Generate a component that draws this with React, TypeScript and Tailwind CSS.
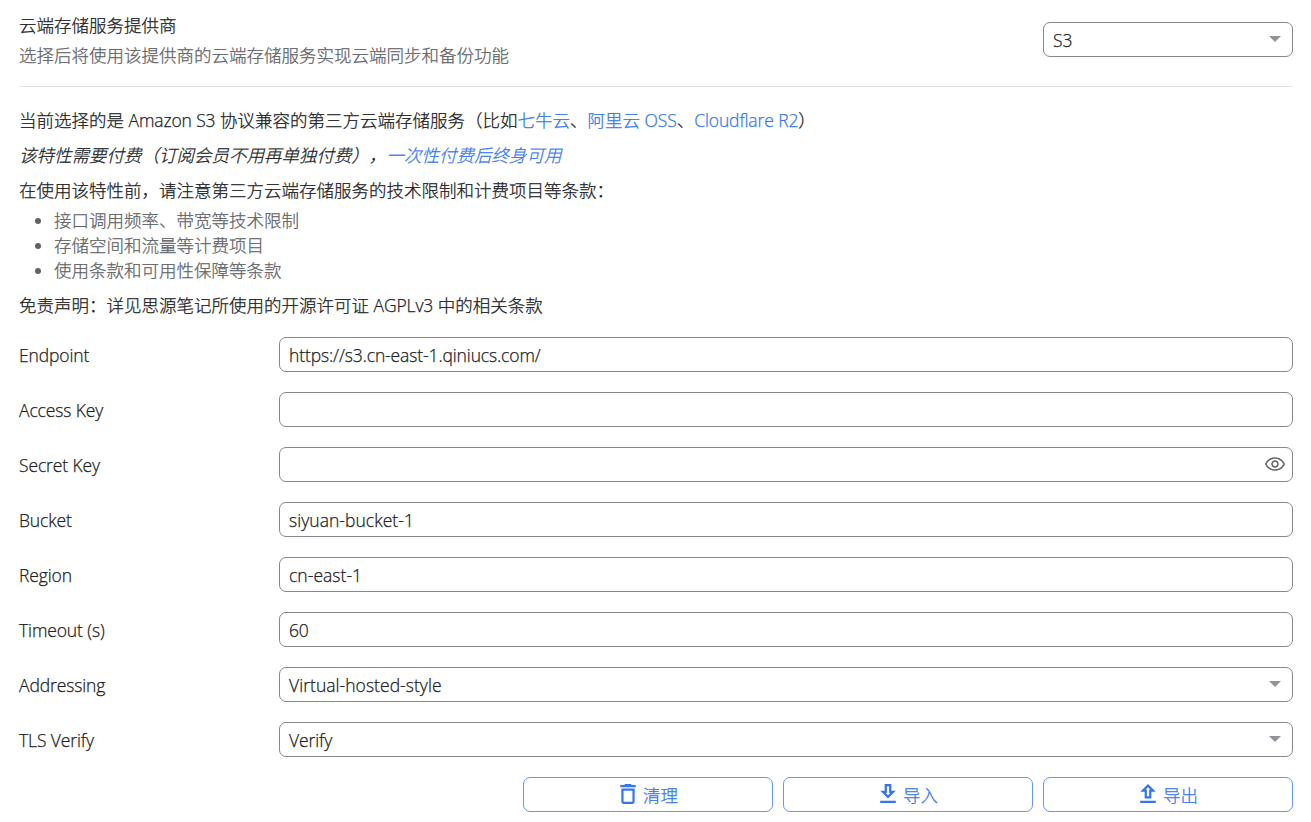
import React from 'react';

interface LatinProps {
  children: React.ReactNode;
  className?: string;
}

const Latin: React.FC<LatinProps> = ({ children, className = 'tracking-[-0.12px]' }) => (
  <span className={`whitespace-nowrap ${className}`}>{children}</span>
);

const CaretIcon: React.FC = () => (
  <svg className="w-3 h-1.5 mr-[11px] mb-px shrink-0" viewBox="0 0 12 6" fill="#919398">
    <path d="M0 0h12L6 6z" />
  </svg>
);

const EyeIcon: React.FC = () => (
  <svg className="w-5 h-5 mr-[7px] mb-px shrink-0" viewBox="1 0.5 22 22" fill="#5f6368">
    <path d="M12 5.6c3.9 0 7.4 2.2 9.2 5.9-1.8 3.7-5.3 5.9-9.2 5.9s-7.4-2.2-9.2-5.9C4.6 7.800 8.100 5.600 12 5.600m0-1.600C7 4 2.730 7.110 1 11.500 2.730 15.890 7 19 12 19s9.270-3.110 11-7.500C21.270 7.110 17 4 12 4zm0 5c1.380 0 2.500 1.120 2.500 2.500S13.380 14 12 14s-2.500-1.120-2.500-2.500S10.620 9 12 9m0-1.600c-2.260 0-4.100 1.840-4.100 4.100s1.840 4.100 4.100 4.100 4.100-1.840 4.100-4.100-1.840-4.100-4.100-4.100z" />
  </svg>
);

interface FieldProps {
  label: string;
  value?: string;
  valueTracking?: string;
  icon?: React.ReactNode;
}

const fields: FieldProps[] = [
  { label: 'Endpoint', value: 'https://s3.cn-east-1.qiniucs.com/' },
  { label: 'Access Key' },
  { label: 'Secret Key', icon: <EyeIcon /> },
  { label: 'Bucket', value: 'siyuan-bucket-1', valueTracking: 'tracking-[0.04px]' },
  { label: 'Region', value: 'cn-east-1', valueTracking: 'tracking-[0.04px]' },
  { label: 'Timeout (s)', value: '60' },
  {
    label: 'Addressing',
    value: 'Virtual-hosted-style',
    valueTracking: 'tracking-[0.04px]',
    icon: <CaretIcon />,
  },
  { label: 'TLS Verify', value: 'Verify', icon: <CaretIcon /> },
];

const Field: React.FC<FieldProps> = ({ label, value, valueTracking, icon }) => (
  <label className="flex items-center h-[35px]">
    <span className="w-[260px] shrink-0 pt-0.5">
      <Latin>{label}</Latin>
    </span>
    <span className="flex flex-1 items-center h-full rounded-[7px] border border-[#85878c] pl-[9px]">
      <span className="flex-1 pt-0.5">
        <Latin className={valueTracking}>{value}</Latin>
      </span>
      {icon}
    </span>
  </label>
);

const actions = [
  {
    label: '清理',
    path: 'M6 19c0 1.1.9 2 2 2h8c1.1 0 2-.9 2-2V7H6v12zM8 9h8v10H8V9zm7.5-5l-1-1h-5l-1 1H5v2h14V4z',
  },
  {
    label: '导入',
    path: 'M19 9h-4V3H9v6H5l7 7 7-7zm-8 2V5h2v6h1.17L12 13.17 9.83 11H11zm-6 7h14v2H5z',
  },
  {
    label: '导出',
    path: 'M9 16h6v-6h4l-7-7-7 7h4v6zm3-10.17L14.17 8H13v6h-2V8H9.83L12 5.83zM5 18h14v2H5z',
  },
];

const Link: React.FC<{ children: React.ReactNode }> = ({ children }) => (
  <a href="#" className="text-[#3575f0]">{children}</a>
);

export default function App() {
  return (
    <div className="h-[822px] overflow-hidden bg-white pl-[19px] pr-[18px] pt-[13px] font-['Open_Sans','Noto_Sans_CJK_SC',sans-serif] font-light text-[17.5px] leading-[25px] text-[#202124] [-webkit-text-stroke:0.25px]">
      <div className="flex items-start justify-between h-[74px] border-b border-[#e0e0e0]">
        <div className="flex flex-col gap-[5px]">
          <div>云端存储服务提供商</div>
          <div className="text-[#5f6368]">选择后将使用该提供商的云端存储服务实现云端同步和备份功能</div>
        </div>
        <div className="mt-[9px] flex items-center w-[250px] h-[35px] rounded-[7px] border border-[#85878c] pl-[9px]">
          <span className="flex-1 pt-0.5">
            <Latin>S3</Latin>
          </span>
          <CaretIcon />
        </div>
      </div>

      <div className="mt-[21px] whitespace-nowrap">
        <p>
          当前选择的是 <Latin>Amazon S3</Latin> 协议兼容的第三方云端存储服务（比如<Link>七牛云</Link>、<Link>阿里云 <Latin>OSS</Latin></Link>、<Link><Latin>Cloudflare R2</Latin></Link>）
        </p>
        <p className="mt-2.5 italic [text-spacing-trim:space-all]">
          该特性需要付费（订阅会员不用再单独付费），<Link>一次性付费后终身可用</Link>
        </p>
        <p className="mt-2.5">在使用该特性前，请注意第三方云端存储服务的技术限制和计费项目等条款：</p>
        <ul className="mt-[5px] list-disc pl-[35px] text-[#5f6368]">
          <li>接口调用频率、带宽等技术限制</li>
          <li>存储空间和流量等计费项目</li>
          <li>使用条款和可用性保障等条款</li>
        </ul>
        <p className="mt-2.5">
          免责声明：详见思源笔记所使用的开源许可证 <Latin>AGPLv3</Latin> 中的相关条款
        </p>
      </div>

      <div className="mt-[19px] flex flex-col gap-5">
        {fields.map((field) => (
          <Field key={field.label} {...field} />
        ))}
      </div>

      <div className="mt-5 flex justify-end gap-2.5">
        {actions.map(({ label, path }) => (
          <button
            key={label}
            className="flex items-center justify-center gap-[5px] w-[250px] h-[35px] rounded-[7px] border border-[#6496f3] text-[#3575f0]"
          >
            <svg className="w-5 h-5 mb-px" viewBox="3 3 18 18" fill="currentColor" stroke="none">
              <path d={path} />
            </svg>
            <span className="pt-0.5">{label}</span>
          </button>
        ))}
      </div>
    </div>
  );
}
